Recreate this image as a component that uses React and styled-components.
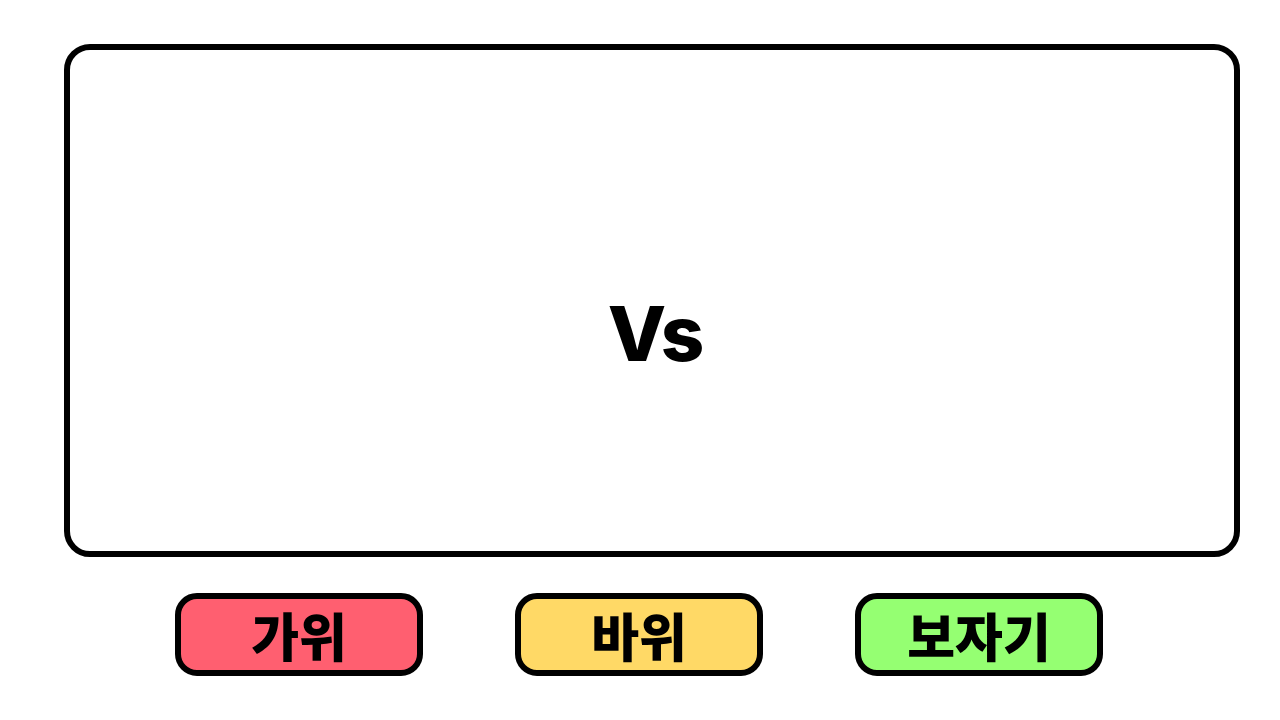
import styled, { createGlobalStyle } from 'styled-components'

const GlobalStyle = createGlobalStyle`
	html, body {
		margin: 0;
		padding: 0;
		background: #ffffff;
		font-family: 'Noto Sans CJK KR', 'Noto Sans', sans-serif;
	}
`

const choices = [
	{ label: '가위', color: '#ff5f70' },
	{ label: '바위', color: '#ffd966' },
	{ label: '보자기', color: '#95ff72' },
]

function App() {
	return (
		<>
			<GlobalStyle />
			<Page>
				<Board>
					<Versus>Vs</Versus>
				</Board>
				<Choices>
					{choices.map(({ label, color }) => (
						<Choice key={label} color={color}>
							{label}
						</Choice>
					))}
				</Choices>
			</Page>
		</>
	)
}

export default App

const Page = styled.div`
	width: 1280px;
	height: 720px;
	padding-top: 44px;
	box-sizing: border-box;
	display: flex;
	flex-direction: column;
`
const Board = styled.div`
	margin: 0 40px 0 64px;
	height: 513px;
	box-sizing: border-box;
	border: 6px solid #000000;
	border-radius: 26px;
	display: flex;
	justify-content: center;
	align-items: center;
	padding-top: 64px;
`
const Versus = styled.div`
	font-family: Inter, 'Noto Sans', sans-serif;
	font-size: 76px;
	font-weight: 800;
	line-height: 1;
	color: #000000;
	letter-spacing: -2px;
	padding-left: 6px;
`
const Choices = styled.div`
	margin-top: 36px;
	padding-right: 2px;
	display: flex;
	justify-content: center;
	gap: 92px;
`
const Choice = styled.button`
	width: 248px;
	height: 83px;
	box-sizing: border-box;
	border: 6px solid #000000;
	border-radius: 22px;
	background-color: ${({ color }) => color};
	font-family: 'Noto Sans CJK KR', 'Noto Sans', sans-serif;
	font-size: 52px;
	font-weight: 900;
	line-height: 1;
	color: #000000;
	display: flex;
	justify-content: center;
	align-items: center;
	padding: 0;
	cursor: pointer;
`
